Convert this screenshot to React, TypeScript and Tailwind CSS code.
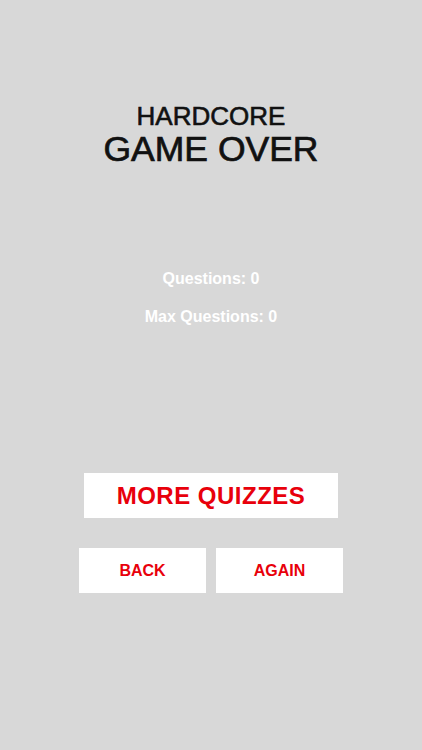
export default function App() {
  return (
    <div
      className="w-[422px] h-[750px] bg-[#d8d8d8] flex flex-col items-center overflow-hidden"
      style={{ fontFamily: '"Liberation Sans", Arial, sans-serif' }}
    >
      <div className="mt-[103px] text-[26px] leading-[26px] text-[#111] [-webkit-text-stroke:0.6px_#111]">HARDCORE</div>
      <div className="mt-[3px] text-[35.5px] leading-[35px] text-[#111] [-webkit-text-stroke:0.7px_#111]">GAME OVER</div>
      <div className="mt-[104px] text-[16px] leading-[16px] font-bold text-white">Questions: 0</div>
      <div className="mt-[22px] text-[16px] leading-[16px] font-bold text-white">Max Questions: 0</div>
      <button className="mt-[148px] w-[254px] h-[45px] bg-white flex items-center justify-center text-[24px] leading-[24px] font-bold text-[#e8000b] tracking-[0.5px]">
        MORE QUIZZES
      </button>
      <div className="mt-[30px] flex gap-[10px]">
        <button className="w-[127px] h-[45px] bg-white flex items-center justify-center text-[16px] leading-[16px] font-bold text-[#e8000b]">
          BACK
        </button>
        <button className="w-[127px] h-[45px] bg-white flex items-center justify-center text-[16px] leading-[16px] font-bold text-[#e8000b]">
          AGAIN
        </button>
      </div>
    </div>
  );
}
